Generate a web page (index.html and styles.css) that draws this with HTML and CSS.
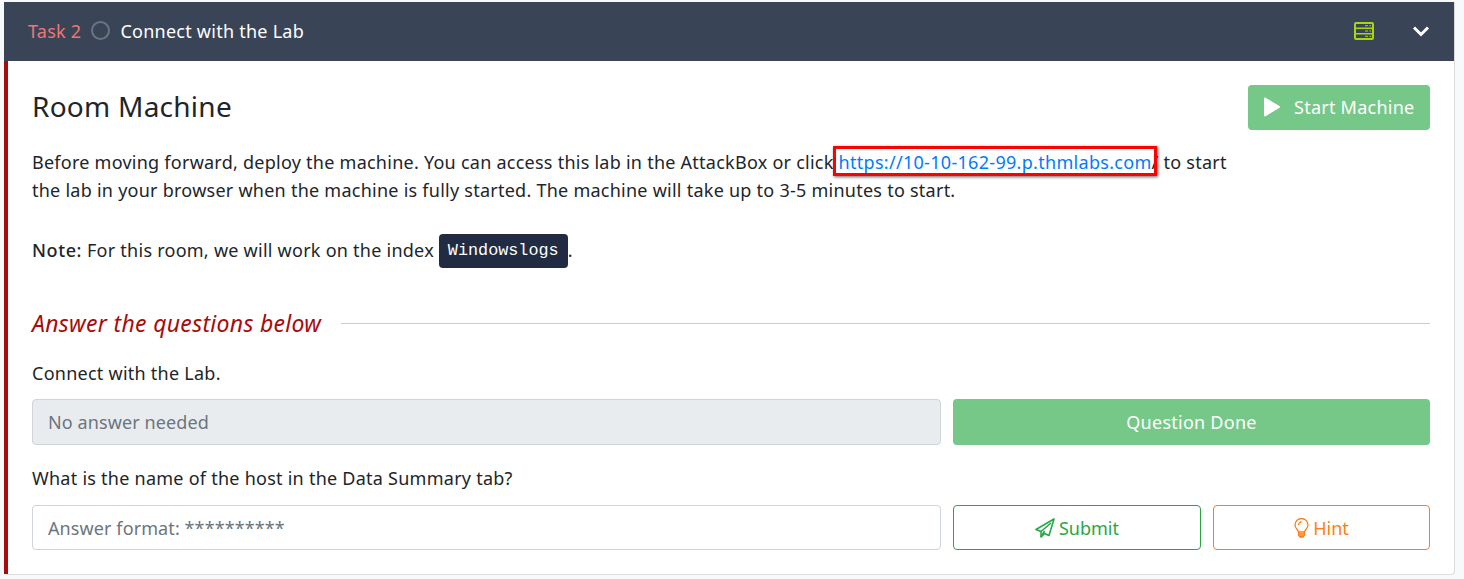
FILE: index.html
```html
<!DOCTYPE html>
<html lang="en">
<head>
    <meta charset="UTF-8">
    <title>Task 2</title>
    <link rel="stylesheet" href="styles.css">
</head>
<body>
    <div class="task-card">
        <header class="task-header">
            <span class="task-num">Task 2</span>
            <span class="task-status"></span>
            <span class="task-title">Connect with the Lab</span>
            <svg class="server-icon" width="20" height="18" viewBox="0 0 20 18" fill="none" stroke="#a6d615" stroke-width="2">
                <rect x="1" y="1" width="18" height="16" rx="1"/>
                <path d="M1 6.300h18M1 11.700h18" stroke-width="1.500"/>
                <path d="M11 3.700h3M15.500 3.700h1.500M11 9h3M15.500 9h1.500M11 14.300h3M15.500 14.300h1.500" stroke-width="1"/>
            </svg>
            <svg class="chevron-icon" width="18" height="12" viewBox="0 0 18 12" fill="none" stroke="#fff" stroke-width="3">
                <path d="M2 2.500l7 7 7-7"/>
            </svg>
        </header>

        <div class="task-body">
            <div class="machine-row">
                <h2>Room Machine</h2>
                <button class="btn-start">
                    <svg width="18" height="20" viewBox="0 0 18 20" fill="#fff"><path d="M1 1.500c0-.8.8-1.200 1.500-.8l14 8.400c.6.4.6 1.300 0 1.700l-14 8.400c-.7.4-1.500 0-1.500-.8z"/></svg>
                    Start Machine
                </button>
            </div>

            <p class="intro">Before moving forward, deploy the machine. You can access this lab in the AttackBox or click <a class="lab-link" href="#">https://10-10-162-99.p.thmlabs.com</a>/ to start the lab in your browser when the machine is fully started. The machine will take up to 3-5 minutes to start.</p>
            <p class="note"><strong>Note:</strong> For this room, we will work on the index <code>Windowslogs</code>.</p>

            <div class="answer-title">
                <em>Answer the questions below</em>
                <span class="rule"></span>
            </div>

            <div class="question">
                <p>Connect with the Lab.</p>
                <div class="answer-row">
                    <input class="answer-input" type="text" placeholder="No answer needed" disabled>
                    <button class="btn-done">Question Done</button>
                </div>
            </div>

            <div class="question question-open">
                <p>What is the name of the host in the Data Summary tab?</p>
                <div class="answer-row">
                    <input class="answer-input" type="text" placeholder="Answer format: **********">
                    <button class="btn-submit">
                        <svg width="20" height="20" viewBox="0 0 20 20" fill="none" stroke="#28a745" stroke-width="1.600" stroke-linejoin="round"><path d="M19 1L1 11.500l5 2V19l3.500-3.500 4.500 2z"/><path d="M6 13.500L16 5M6 19l3.500-6"/></svg>
                        Submit
                    </button>
                    <button class="btn-hint">
                        <svg width="15" height="20" viewBox="0 0 15 20" fill="none" stroke="#fd7e14" stroke-width="1.300"><path d="M4.500 14c0-2-3.500-3.500-3.500-7a6.500 6.500 0 0 1 13 0c0 3.500-3.500 5-3.500 7z"/><path d="M4.500 16h6M5 18h5M4.500 14v3l1.500 2h3l1.500-2v-3"/><path d="M4.500 7a3 3 0 0 1 3-3"/></svg>
                        Hint
                    </button>
                </div>
            </div>
        </div>
    </div>
</body>
</html>
```

FILE: styles.css
```css
* {
    box-sizing: border-box;
}

body {
    margin: 0;
    padding: 2px 9px 4px 4px;
    background-color: #f8f9fa;
    font-family: "Noto Sans", sans-serif;
    font-size: 18px;
    letter-spacing: 0.25px;
    color: #212529;
}

.task-card {
    background-color: #fff;
    border-right: 1px solid #dcdcdc;
    border-bottom: 1px solid #dcdcdc;
    border-radius: 0 0 4px 4px;
}

.task-header {
    display: flex;
    align-items: center;
    height: 59px;
    padding: 0 24px 2px;
    background-color: #3a4457;
    color: #fff;
}

.task-num {
    color: #ee7676;
}

.task-status {
    width: 19px;
    height: 19px;
    margin: 0 10px;
    border: 2px solid #6c757d;
    border-radius: 50%;
}

.server-icon {
    margin-left: auto;
}

.chevron-icon {
    margin-left: 38px;
}

.task-body {
    padding: 24px;
    border-left: 4px solid #a80b0b;
}

.machine-row {
    display: flex;
    justify-content: space-between;
    align-items: center;
    height: 45px;
}

.machine-row h2 {
    margin: -4px 0 0;
    font-size: 28px;
    font-weight: 400;
}

.btn-start {
    display: flex;
    align-items: center;
    gap: 13px;
    width: 182px;
    height: 45px;
    padding: 0 15px 2px;
    border: none;
    border-radius: 4px;
    background-color: #75c888;
    color: #fff;
    font: inherit;
    letter-spacing: inherit;
}

.intro {
    margin: 18px 0 0;
    max-width: 1210px;
    line-height: 28px;
}

.lab-link {
    position: relative;
    color: #007bff;
    text-decoration: none;
    letter-spacing: 0.3px;
}

/* red annotation box drawn over the link */
.lab-link::after {
    content: "";
    position: absolute;
    left: -6px;
    right: -5px;
    top: -4px;
    bottom: -2px;
    border: 3px solid #f00;
    box-shadow: 1px 1px 3px rgba(0, 0, 0, 0.6);
}

.note {
    margin: 28px 0 0;
    line-height: 36px;
}

.note strong {
    font-weight: 500;
    letter-spacing: 0.6px;
}

code {
    display: inline-block;
    padding: 0 9px;
    border-radius: 4px;
    background-color: #212c42;
    color: #fff;
    font-family: "Liberation Mono", monospace;
    font-size: 16.8px;
    letter-spacing: 0;
    line-height: 34px;
    vertical-align: 2px;
}

.answer-title {
    display: flex;
    align-items: center;
    gap: 20px;
    margin-top: 39px;
    color: #a80b0b;
    font-size: 23px;
    letter-spacing: 0.3px;
}

.rule {
    flex: 1;
    height: 1px;
    background-color: #ccc;
}

.question p {
    margin: 21px 0 13px;
    line-height: 26px;
}

.question-open p {
    margin: 20px 0 14px;
}

.question-open .answer-input {
    height: 45px;
}

.answer-row {
    display: flex;
    gap: 12px;
}

.answer-input {
    width: 909px;
    height: 46px;
    padding: 0 15px;
    border: 1px solid #ced4da;
    border-radius: 4px;
    font: inherit;
    letter-spacing: 0.1px;
}

.answer-input:disabled {
    background-color: #e9ecef;
}

.answer-input::placeholder {
    color: #6c757d;
}

.btn-done {
    flex: 1;
    border: none;
    border-radius: 4px;
    background-color: #75c888;
    color: #fff;
    font: inherit;
    letter-spacing: inherit;
}

.btn-submit, .btn-hint {
    display: flex;
    align-items: center;
    justify-content: center;
    gap: 4px;
    background-color: #fff;
    border-radius: 4px;
    font: inherit;
}

.btn-submit {
    width: 248px;
    border: 1px solid #28a745;
    color: #28a745;
}

.btn-hint {
    flex: 1;
    border: 1px solid #fd7e14;
    color: #fd7e14;
}
```
